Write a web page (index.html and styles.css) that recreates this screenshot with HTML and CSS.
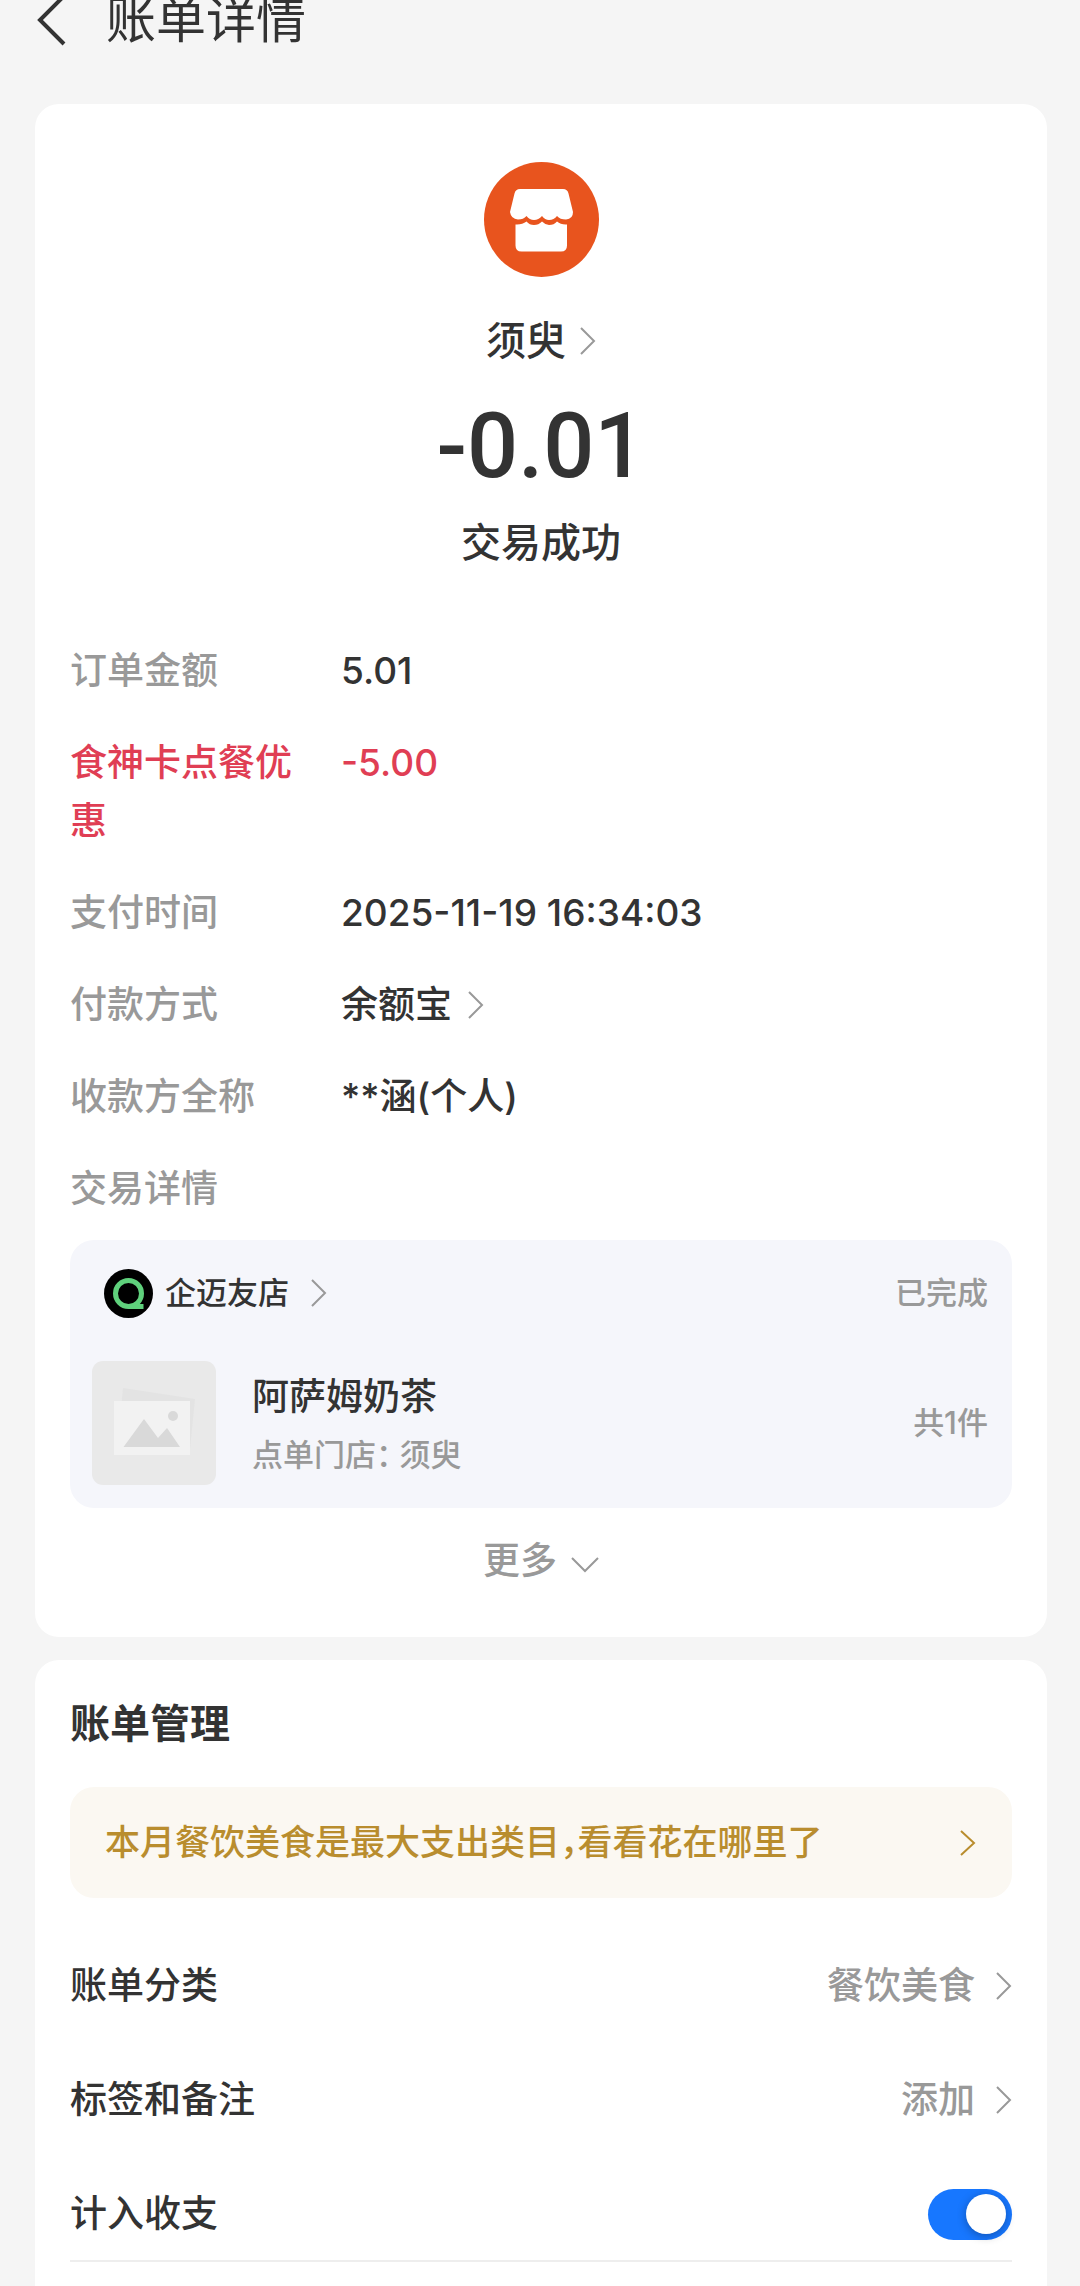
FILE: index.html
```html
<!DOCTYPE html>
<html lang="zh-CN">
<head>
<meta charset="utf-8">
<meta name="viewport" content="width=device-width, initial-scale=1">
<title>账单详情</title>
<link rel="stylesheet" href="styles.css">
</head>
<body>
<header class="topbar">
  <button class="back" type="button" aria-label="返回">
    <svg width="32" height="54" viewBox="0 0 32 54" fill="none" stroke="currentColor" stroke-width="4"><path d="M29 3 5 27l24 24"/></svg>
  </button>
  <h1 class="topbar-title">账单详情</h1>
</header>

<main class="page">
  <section class="card bill">
    <div class="summary">
      <svg class="shop-icon" viewBox="0 0 115 115" aria-hidden="true">
        <circle cx="57.500" cy="57.500" r="57.500" fill="#e8541e"/>
        <path fill="#fff" d="M36 27H79q4.500 0 5.500 4.500L89 50Q89 57 82 57.500Q76 57.500 73 54Q70 58 65 58Q61 58 58 54Q54.500 58 50 58Q45.500 58 42.500 54Q39.500 57.500 34 57.500Q27 57 26 50L30.500 31.500Q31.500 27 36 27Z"/>
        <path fill="#fff" d="M31.500 62.500Q38 63 42.500 59.500Q45.500 63 50 63Q54.500 63 58 59.500Q61.500 63 65 63Q70 63 73 59.500Q77 63 83 62.500V83.500Q83 89.500 77 89.500H37.500Q31.500 89.500 31.500 83.500Z"/>
      </svg>
      <a class="merchant" href="#merchant">须臾
        <svg class="chevron" viewBox="0 0 16 28"><path d="M1 1 14 14 1 27"/></svg>
      </a>
      <p class="amount">-0.01</p>
      <p class="status">交易成功</p>
    </div>

    <dl class="details">
      <dt>订单金额</dt><dd>5.01</dd>
      <dt class="discount">食神卡点餐优惠</dt><dd class="discount">-5.00</dd>
      <dt>支付时间</dt><dd>2025-11-19 16:34:03</dd>
      <dt>付款方式</dt>
      <dd><a class="pay-method" href="#pay">余额宝 <svg class="chevron" viewBox="0 0 16 28"><path d="M1 1 14 14 1 27"/></svg></a></dd>
      <dt>收款方全称</dt><dd>**涵(个人)</dd>
      <dt>交易详情</dt>
    </dl>

    <article class="order">
      <div class="order-head">
        <a class="store" href="#store">
          <svg class="store-logo" viewBox="0 0 49 49" aria-hidden="true">
            <circle cx="24.500" cy="24.500" r="24.500" fill="#000"/>
            <g fill="none" stroke="#5fd17c" stroke-width="5"><circle cx="24.500" cy="24.500" r="13"/><path d="M24.500 37.500H39.500"/></g>
          </svg>
          <span class="store-name">企迈友店</span>
          <svg class="chevron" viewBox="0 0 16 28"><path d="M1 1 14 14 1 27"/></svg>
        </a>
        <span>已完成</span>
      </div>
      <div class="order-body">
        <svg class="thumb" viewBox="0 0 124 124" aria-hidden="true">
          <rect width="124" height="124" rx="11" fill="#e9e9e9"/>
          <path fill="#e3e3e3" d="M31 27 103 38 98 88 26 80Z"/>
          <rect x="22" y="40" width="76" height="54" fill="#f2f2f2"/>
          <circle cx="81" cy="55" r="5" fill="#d9d9d9"/>
          <path fill="#d9d9d9" d="M31.500 86 52 58 66 77 75 67 88 86Z"/>
        </svg>
        <div class="goods">
          <h2 class="goods-name">阿萨姆奶茶</h2>
          <p class="goods-store">点单门店<span class="half colon">：</span>须臾</p>
        </div>
        <span>共1件</span>
      </div>
    </article>

    <button class="more" type="button">更多
      <svg class="chevron-down" viewBox="0 0 28 16"><path d="M1 1 14 14 27 1"/></svg>
    </button>
  </section>

  <section class="card manage">
    <h2 class="manage-title">账单管理</h2>
    <a class="banner" href="#analysis">
      <span>本月餐饮美食是最大支出类目<span class="half">，</span>看看花在哪里了</span>
      <svg class="chevron" viewBox="0 0 16 28"><path d="M1 2 14 14 1 26"/></svg>
    </a>
    <div class="settings">
      <a class="row" href="#category">
        <span>账单分类</span>
        <span class="row-value">餐饮美食 <svg class="chevron" viewBox="0 0 16 28"><path d="M1 1 14 14 1 27"/></svg></span>
      </a>
      <a class="row" href="#tags">
        <span>标签和备注</span>
        <span class="row-value">添加 <svg class="chevron" viewBox="0 0 16 28"><path d="M1 1 14 14 1 27"/></svg></span>
      </a>
      <div class="row row-last">
        <label for="count-in">计入收支</label>
        <input class="switch" id="count-in" type="checkbox" role="switch" checked>
      </div>
    </div>
  </section>
</main>
</body>
</html>
```
FILE: styles.css
```css
* {
  box-sizing: border-box;
  margin: 0;
  padding: 0;
}

body {
  display: flex;
  flex-direction: column;
  min-height: 100vh;
  background: #f5f5f5;
  color: #333;
  font: 500 37px/58px Inter, "Noto Sans CJK SC", sans-serif;
}

a {
  color: inherit;
  text-decoration: none;
}

button {
  border: 0;
  background: none;
  color: inherit;
  font: inherit;
}

svg {
  flex: none;
}

/* The bar is partly scrolled out of view. */
.topbar {
  display: flex;
  align-items: center;
  gap: 39px;
  margin-top: -16px;
  padding: 0 35px 48px;
}

.back {
  display: flex;
}

.topbar-title {
  font-size: 50px;
  font-weight: 400;
  line-height: 72px;
}

.page {
  display: flex;
  flex: 1;
  flex-direction: column;
  gap: 23px;
  padding: 0 33px 0 35px;
}

.card {
  padding: 0 35px;
  border-radius: 24px;
  background: #fff;
}

.chevron {
  width: 16px;
  height: 28px;
}

.chevron-down {
  width: 28px;
  height: 16px;
  margin-top: 8px;
}

.chevron,
.chevron-down {
  fill: none;
  stroke: #999;
  stroke-width: 2;
}

/* summary */
.bill {
  padding-top: 58px;
  padding-bottom: 48px;
}

.summary {
  display: flex;
  flex-direction: column;
  align-items: center;
  font-size: 40px;
  line-height: 56px;
}

.shop-icon {
  width: 115px;
  height: 115px;
  margin-bottom: 36px;
}

.merchant {
  display: flex;
  align-items: center;
  gap: 14px;
}

.amount {
  margin: 28px 0 18px;
  font: 500 90px/100px Roboto, sans-serif;
}

/* details */
.details {
  display: grid;
  grid-template-columns: 240px 1fr;
  gap: 34px 31px;
  margin: 71px 0 22px;
}

.details dt {
  color: #999;
}

.details .discount {
  color: #e03e54;
}

.pay-method {
  display: inline-flex;
  align-items: center;
  gap: 16px;
}

/* order */
.order {
  padding: 28px 24px 23px 22px;
  border-radius: 24px;
  background: #f5f6fb;
  color: #999;
  font-size: 31px;
}

.order-head,
.order-body,
.store {
  display: flex;
  align-items: center;
}

.order-head {
  justify-content: space-between;
  padding-left: 12px;
  line-height: 50px;
}

.store {
  color: #333;
}

.store-logo {
  width: 49px;
  height: 49px;
}

.store-name {
  margin: 0 22px 0 12px;
}

.order-body {
  margin-top: 43px;
}

.thumb {
  width: 124px;
  height: 124px;
}

.goods {
  flex: 1;
  margin-left: 36px;
  padding-top: 6px;
}

.goods-name {
  color: #333;
  font-size: 37px;
  font-weight: 500;
}

/* Colon and comma take less than a full square. */
.half {
  font-feature-settings: "halt";
}

.colon {
  padding-right: 8px;
}

.more {
  display: flex;
  align-items: center;
  justify-content: center;
  gap: 14px;
  width: 100%;
  margin-top: 25px;
  color: #999;
  line-height: 56px;
}

/* management */
.manage {
  flex: 1;
  padding-top: 36px;
  padding-bottom: 24px;
  border-radius: 24px 24px 0 0;
}

.manage-title {
  font-size: 40px;
  font-weight: 700;
  line-height: 56px;
}

.banner {
  display: flex;
  align-items: center;
  justify-content: space-between;
  margin: 35px 0 59px;
  padding: 28px 36px 28px 35px;
  border-radius: 24px;
  background: #fbf8f2;
  color: #b98d2e;
  font-size: 35px;
  line-height: 55px;
}

.banner .chevron {
  stroke: #b98d2e;
}

.settings {
  display: flex;
  flex-direction: column;
  gap: 56px;
}

.row {
  display: flex;
  align-items: center;
  justify-content: space-between;
}

.row-last {
  padding-bottom: 17px;
  border-bottom: 2px solid #eee;
}

.row-value {
  display: flex;
  align-items: center;
  gap: 21px;
  color: #999;
}

.switch {
  display: flex;
  align-items: center;
  justify-content: flex-end;
  width: 84px;
  height: 51px;
  padding: 0 6px;
  border-radius: 26px;
  background: #1777ff;
  appearance: none;
}

.switch::before {
  width: 40px;
  height: 40px;
  border-radius: 50%;
  background: #fff;
  box-shadow: 0 2px 10px rgba(0, 0, 0, 0.3);
  content: "";
}

.switch:not(:checked) {
  justify-content: flex-start;
  background: #ccc;
}
```
